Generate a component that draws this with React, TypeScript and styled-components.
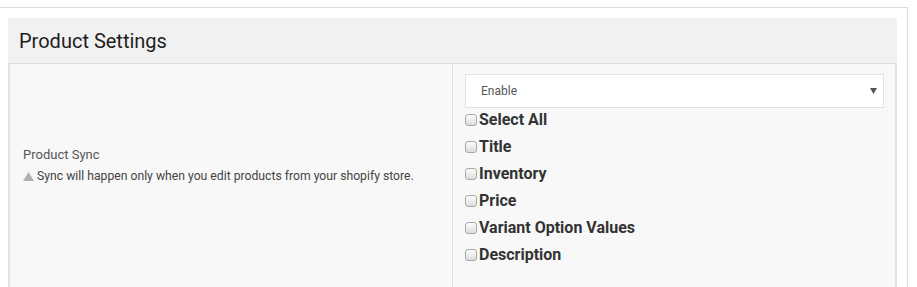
import styled, { createGlobalStyle } from "styled-components";

const syncFields = [
  "Select All",
  "Title",
  "Inventory",
  "Price",
  "Variant Option Values",
  "Description",
];

export default function App() {
  return (
    <>
      <GlobalStyle />
      <Page>
        <Panel>
          <PanelHeader>Product Settings</PanelHeader>
          <PanelBody>
            <LabelCell>
              <FieldLabel>Product Sync</FieldLabel>
              <Hint>
                <svg width="11" height="9" viewBox="0 0 11 9" aria-hidden="true">
                  <path d="M5.5 0 L11 9 L0 9 Z" fill="#b0b0b0" />
                </svg>
                Sync will happen only when you edit products from your shopify store.
              </Hint>
            </LabelCell>
            <ControlCell>
              <SelectBox>
                <span>Enable</span>
                <svg width="7" height="6" viewBox="0 0 7 6" aria-hidden="true">
                  <path d="M0 0 L7 0 L3.5 6 Z" fill="#555" />
                </svg>
              </SelectBox>
              <CheckList>
                {syncFields.map((field) => (
                  <CheckRow key={field}>
                    <CheckBox type="checkbox" />
                    {field}
                  </CheckRow>
                ))}
              </CheckList>
            </ControlCell>
          </PanelBody>
        </Panel>
      </Page>
    </>
  );
}

const GlobalStyle = createGlobalStyle`
  body {
    margin: 0;
    background: #ffffff;
    font-family: Roboto, "Liberation Sans", sans-serif;
    overflow: hidden;
  }
`;

const Page = styled.div`
  box-sizing: border-box;
  width: 908px;
  margin-top: 7px;
  padding: 10px 10px 0 8px;
  border-top: 1px solid #dedede;
  border-right: 1px solid #dedede;
  background: #ffffff;
`;

const Panel = styled.div`
  display: flex;
  flex-direction: column;
`;

const PanelHeader = styled.div`
  box-sizing: border-box;
  height: 46px;
  padding: 0 11px;
  display: flex;
  align-items: center;
  background: #f1f1f1;
  border-bottom: 1px solid #dddddd;
  font-size: 20px;
  color: #1e1e1e;
`;

const PanelBody = styled.div`
  display: grid;
  grid-template-columns: 443px 1fr;
  background: #f8f8f8;
  border-left: 2px solid #e3e3e3;
  border-right: 2px solid #e3e3e3;
  min-height: 240px;
`;

const LabelCell = styled.div`
  padding: 82px 0 0 13px;
  border-right: 1px solid #e2e2e2;
`;

const FieldLabel = styled.div`
  font-size: 13px;
  line-height: 18px;
  color: #555;
`;

const Hint = styled.div`
  margin-top: 3px;
  display: flex;
  align-items: center;
  gap: 3px;
  font-size: 12.2px;
  line-height: 18px;
  color: #444;
`;

const ControlCell = styled.div`
  padding: 10px 11px 12px 12px;
`;

const SelectBox = styled.div`
  box-sizing: border-box;
  height: 34px;
  display: flex;
  align-items: center;
  justify-content: space-between;
  padding: 0 6px 0 15px;
  background: #ffffff;
  border: 1px solid #e2e2e2;
  font-size: 12px;
  color: #555;
`;

const CheckList = styled.div`
  display: flex;
  flex-direction: column;
  margin-top: -2px;
`;

const CheckRow = styled.label`
  display: flex;
  align-items: center;
  height: 27px;
  font-size: 16px;
  font-weight: 700;
  color: #333;
`;

const CheckBox = styled.input`
  appearance: none;
  box-sizing: border-box;
  width: 12px;
  height: 12px;
  margin: 0 2px 0 0;
  border: 1px solid #a8a8a8;
  border-radius: 3px;
  background: linear-gradient(#fdfdfd, #dcdcdc);
`;
